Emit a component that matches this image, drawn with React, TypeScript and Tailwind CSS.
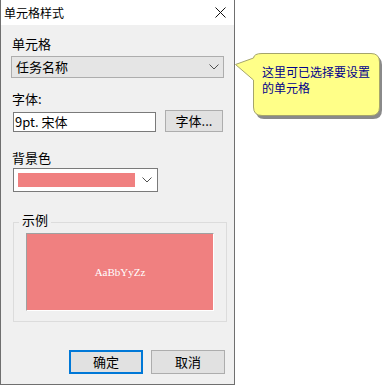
import React from "react";

const Chevron = ({ className }: { className?: string }) => (
  <svg className={className} width="10" height="6" viewBox="0 0 10 6">
    <path d="M0.5 0.5 L5 5 L9.5 0.5" fill="none" stroke="#505050" strokeWidth="1" />
  </svg>
);

export default function App() {
  return (
    <div
      className="relative w-[383px] h-[386px] bg-white text-black"
      style={{ fontFamily: '"Noto Sans CJK SC", "Noto Sans", sans-serif' }}
    >
      <div className="w-[235px] h-[385px] border-x border-b border-[#6f6f6f] bg-[#f0f0f0] flex flex-col">
        <div className="h-[25px] bg-white flex items-center justify-between pl-[3px] pr-[8px] shrink-0">
          <span className="text-[12px] leading-[16px]">单元格样式</span>
          <svg width="11" height="11" viewBox="0 0 11 11">
            <path d="M0.5 0.5 L10.5 10.5 M10.5 0.5 L0.5 10.5" stroke="#111" strokeWidth="1" />
          </svg>
        </div>
        <div className="flex-1 flex flex-col text-[13px]">
          <div className="mt-[11px] ml-[11px] leading-[16px] h-[16px]">单元格</div>
          <div className="mt-[4px] ml-[10px] w-[213px] h-[22px] border border-[#adadad] bg-[#e5e5e5] flex items-center justify-between pl-[4px] pr-[4px]">
            <span className="leading-[16px]">任务名称</span>
            <Chevron />
          </div>
          <div className="mt-[13px] ml-[11px] leading-[16px] h-[16px]">字体:</div>
          <div className="mt-[3px] flex items-start h-[22px]">
            <div className="ml-[12px] mt-[2px] w-[143px] h-[20px] border border-[#7a7a7a] bg-white flex items-center pl-[1px] leading-[16px]">
              9pt. 宋体
            </div>
            <div className="ml-[9px] w-[58px] h-[22px] border border-[#adadad] bg-[#e1e1e1] flex items-center justify-center leading-[16px]">
              字体...
            </div>
          </div>
          <div className="mt-[18px] ml-[11px] leading-[16px] h-[16px]">背景色</div>
          <div className="mt-[2px] ml-[12px] w-[145px] h-[24px] border border-[#7a7a7a] bg-white flex items-center pl-[4px] pr-[5px] justify-between">
            <div className="w-[117px] h-[14px] bg-[#f08080]" />
            <Chevron />
          </div>
          <div className="relative mt-[30px] ml-[12px] w-[214px] h-[100px] border border-[#dcdcdc]">
            <span className="absolute left-[5px] top-[-11px] px-[3px] bg-[#f0f0f0] leading-[16px]">示例</span>
            <div
              className="mt-[10px] ml-[12px] w-[188px] h-[78px] bg-[#f08080] border-t border-l border-[#a0a0a0] border-r-white border-b-white border-r border-b flex items-center justify-center text-white text-[11px]"
              style={{ fontFamily: '"Liberation Serif", "DejaVu Serif", serif' }}
            >
              AaBbYyZz
            </div>
          </div>
          <div className="mt-auto mb-[10px] flex justify-end gap-[8px] pr-[9px]">
            <div className="w-[74px] h-[24px] border-2 border-[#0078d7] bg-[#e1e1e1] flex items-center justify-center leading-[16px]">
              确定
            </div>
            <div className="w-[74px] h-[24px] border border-[#adadad] bg-[#e1e1e1] flex items-center justify-center leading-[16px]">
              取消
            </div>
          </div>
        </div>
      </div>

      <div className="absolute left-[235px] top-[50px] w-[148px] h-[72px]">
        <svg width="148" height="72" viewBox="0 0 148 72" className="absolute left-0 top-0">
          <path
            d="M21 10 Q21 6 29 6 L138 6 Q147 6 147 15 L147 60 Q147 69 138 69 L29 69 Q21 69 21 60 Z"
            fill="#8a8a8a"
          />
          <path
            d="M0.5 14.5 L18.5 8 Q19 3.5 27 3.5 L136 3.5 Q144.5 3.5 144.5 12 L144.5 57 Q144.5 65.5 136 65.5 L27 65.5 Q18.5 65.5 18.5 57 L18.5 30 Z"
            fill="#ffff88"
            stroke="#a4a46c"
            strokeWidth="1"
          />
        </svg>
        <div className="absolute left-[27px] top-[14px] text-[12px] leading-[16px] text-[#00008b] w-[115px]">
          这里可已选择要设置
          <br />
          的单元格
        </div>
      </div>
    </div>
  );
}
